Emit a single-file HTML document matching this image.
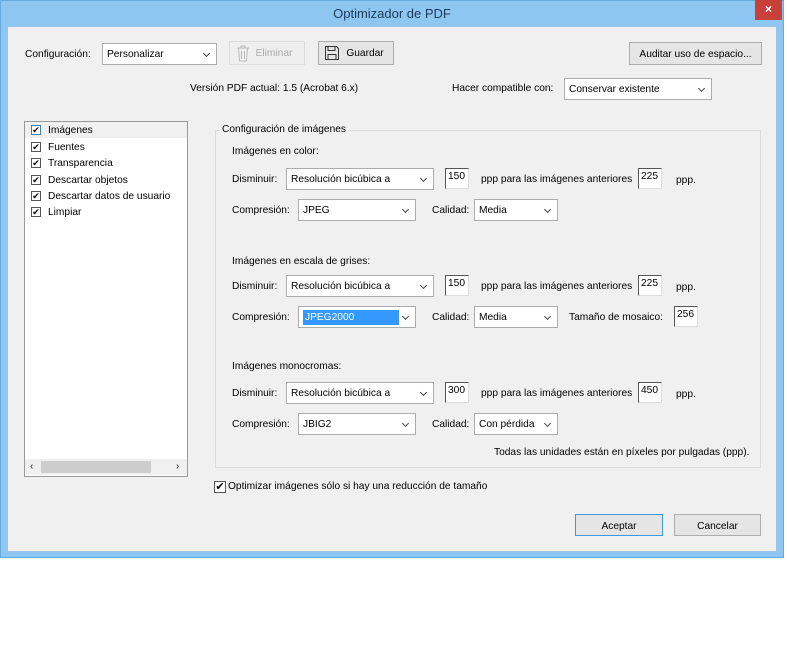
<!DOCTYPE html>
<html><head><meta charset="utf-8"><style>
*{box-sizing:border-box;margin:0;padding:0}
body{width:787px;height:653px;background:#fff;font-family:"Liberation Sans",sans-serif;font-size:10.2px;color:#000;position:relative;overflow:hidden}
.a{position:absolute;white-space:nowrap}
#frame{position:absolute;left:0;top:0;width:784px;height:558px;background:#8ec6f2;border:1px solid #6aa9dc}
#client{position:absolute;left:7px;top:26px;width:770px;height:526px;background:#f0f0f0;border:1px solid #9cc3e3}
.sel{position:absolute;background:#fff;border:1px solid #acacac;height:22px;padding:5px 0 0 4px}
.sel:after{content:"";position:absolute;right:7px;top:7px;width:4px;height:4px;border-right:1.5px solid #444;border-bottom:1.5px solid #444;transform:rotate(45deg)}
.btn{position:absolute;background:#e5e5e5;border:1px solid #adadad;height:24px;text-align:center;padding-top:6px}
.inp{position:absolute;background:#fff;border:1px solid #ddd;border-left:1px solid #555;border-top:1px solid #555;height:21px;width:24px;padding:2px 0 0 2px}
.cb{position:absolute;width:10px;height:10px;border:1px solid #555;background:#fff;font-size:9px;line-height:8px;text-align:center}
</style></head><body>
<div id="frame"></div>
<div class="a" style="left:0;top:6px;width:784px;text-align:center;font-size:13px;color:#1e3a5a">Optimizador de PDF</div>
<div class="a" style="left:755px;top:0;width:27px;height:20px;background:#c7403a;color:#fff;text-align:center;font-size:12px;font-weight:bold;line-height:19px">×</div>
<div id="client"></div>

<div class="a" style="left:25px;top:49px">Configuración:</div>
<div class="sel" style="left:102px;top:43px;width:115px;background:#fff">Personalizar</div>
<div class="btn" style="left:229px;top:41px;width:76px;color:#aaa;border-color:#ddd;background:#efefef;padding-left:14px">Eliminar
<svg style="position:absolute;left:6px;top:3px" width="14" height="17" viewBox="0 0 14 17"><path d="M1 3h12M5 3V1h4v2M2.5 3l1 13h7l1-13M5.5 6v8M8.5 6v8" fill="none" stroke="#bbb"/></svg></div>
<div class="btn" style="left:318px;top:41px;width:76px;padding-left:18px">Guardar
<svg style="position:absolute;left:5px;top:3px" width="16" height="16" viewBox="0 0 16 16"><path d="M1.5 1.5h11l2 2v11h-13z M4 1.5v4h7v-4 M4 14.5v-5h8v5" fill="none" stroke="#333"/></svg></div>
<div class="btn" style="left:629px;top:42px;width:133px;height:23px">Auditar uso de espacio...</div>

<div class="a" style="left:190px;top:83px">Versión PDF actual: 1.5 (Acrobat 6.x)</div>
<div class="a" style="left:452px;top:83px">Hacer compatible con:</div>
<div class="sel" style="left:564px;top:78px;width:148px">Conservar existente</div>

<div class="a" style="left:24px;top:121px;width:164px;height:356px;background:#fff;border:1px solid #999"></div>
<div class="a" style="left:25px;top:122px;width:162px;height:16px;background:#f0f0f0"></div>
<div class="cb" style="left:31px;top:125px;border-color:#3c7fb1">✔</div><div class="a" style="left:48px;top:125px">Imágenes</div>
<div class="cb" style="left:31px;top:142px">✔</div><div class="a" style="left:48px;top:142px">Fuentes</div>
<div class="cb" style="left:31px;top:158px">✔</div><div class="a" style="left:48px;top:158px">Transparencia</div>
<div class="cb" style="left:31px;top:175px">✔</div><div class="a" style="left:48px;top:175px">Descartar objetos</div>
<div class="cb" style="left:31px;top:191px">✔</div><div class="a" style="left:48px;top:191px">Descartar datos de usuario</div>
<div class="cb" style="left:31px;top:207px">✔</div><div class="a" style="left:48px;top:207px">Limpiar</div>
<div class="a" style="left:25px;top:459px;width:162px;height:16px;background:#f0f0f0"></div>
<div class="a" style="left:41px;top:461px;width:110px;height:12px;background:#cdcdcd"></div>
<div class="a" style="left:30px;top:461px;font-size:10px;color:#555;font-weight:bold">‹</div>
<div class="a" style="left:176px;top:461px;font-size:10px;color:#555;font-weight:bold">›</div>

<div class="a" style="left:215px;top:130px;width:546px;height:338px;border:1px solid #dcdcdc"></div>
<div class="a" style="left:220px;top:124px;background:#f0f0f0;padding:0 2px">Configuración de imágenes</div>

<div class="a" style="left:232px;top:146px">Imágenes en color:</div>
<div class="a" style="left:232px;top:174px">Disminuir:</div>
<div class="sel" style="left:286px;top:168px;width:148px">Resolución bicúbica a</div>
<div class="inp" style="left:445px;top:168px">150</div>
<div class="a" style="left:481px;top:174px">ppp para las imágenes anteriores</div>
<div class="inp" style="left:638px;top:168px">225</div>
<div class="a" style="left:676px;top:175px">ppp.</div>
<div class="a" style="left:232px;top:205px">Compresión:</div>
<div class="sel" style="left:298px;top:199px;width:118px">JPEG</div>
<div class="a" style="left:432px;top:205px">Calidad:</div>
<div class="sel" style="left:474px;top:199px;width:84px">Media</div>

<div class="a" style="left:232px;top:256px">Imágenes en escala de grises:</div>
<div class="a" style="left:232px;top:281px">Disminuir:</div>
<div class="sel" style="left:286px;top:275px;width:148px">Resolución bicúbica a</div>
<div class="inp" style="left:445px;top:275px">150</div>
<div class="a" style="left:481px;top:281px">ppp para las imágenes anteriores</div>
<div class="inp" style="left:638px;top:275px">225</div>
<div class="a" style="left:676px;top:282px">ppp.</div>
<div class="a" style="left:232px;top:312px">Compresión:</div>
<div class="sel" style="left:298px;top:306px;width:118px;padding-top:3px"><span style="background:#3399ff;color:#fff;display:inline-block;width:96px;height:15px;padding:2px 0 0 2px">JPEG2000</span></div>
<div class="a" style="left:432px;top:312px">Calidad:</div>
<div class="sel" style="left:474px;top:306px;width:84px">Media</div>
<div class="a" style="left:569px;top:312px">Tamaño de mosaico:</div>
<div class="inp" style="left:674px;top:306px">256</div>

<div class="a" style="left:232px;top:361px">Imágenes monocromas:</div>
<div class="a" style="left:232px;top:388px">Disminuir:</div>
<div class="sel" style="left:286px;top:382px;width:148px">Resolución bicúbica a</div>
<div class="inp" style="left:445px;top:382px">300</div>
<div class="a" style="left:481px;top:388px">ppp para las imágenes anteriores</div>
<div class="inp" style="left:638px;top:382px">450</div>
<div class="a" style="left:676px;top:389px">ppp.</div>
<div class="a" style="left:232px;top:419px">Compresión:</div>
<div class="sel" style="left:298px;top:413px;width:118px">JBIG2</div>
<div class="a" style="left:432px;top:419px">Calidad:</div>
<div class="sel" style="left:474px;top:413px;width:84px">Con pérdida</div>
<div class="a" style="left:494px;top:447px">Todas las unidades están en píxeles por pulgadas (ppp).</div>

<div class="cb" style="left:214px;top:481px;width:12px;height:12px;font-size:11px;line-height:10px">✔</div>
<div class="a" style="left:228px;top:481px">Optimizar imágenes sólo si hay una reducción de tamaño</div>

<div class="btn" style="left:575px;top:514px;width:88px;height:22px;border-color:#3c9ae0">Aceptar</div>
<div class="btn" style="left:674px;top:514px;width:87px;height:22px">Cancelar</div>
</body></html>
